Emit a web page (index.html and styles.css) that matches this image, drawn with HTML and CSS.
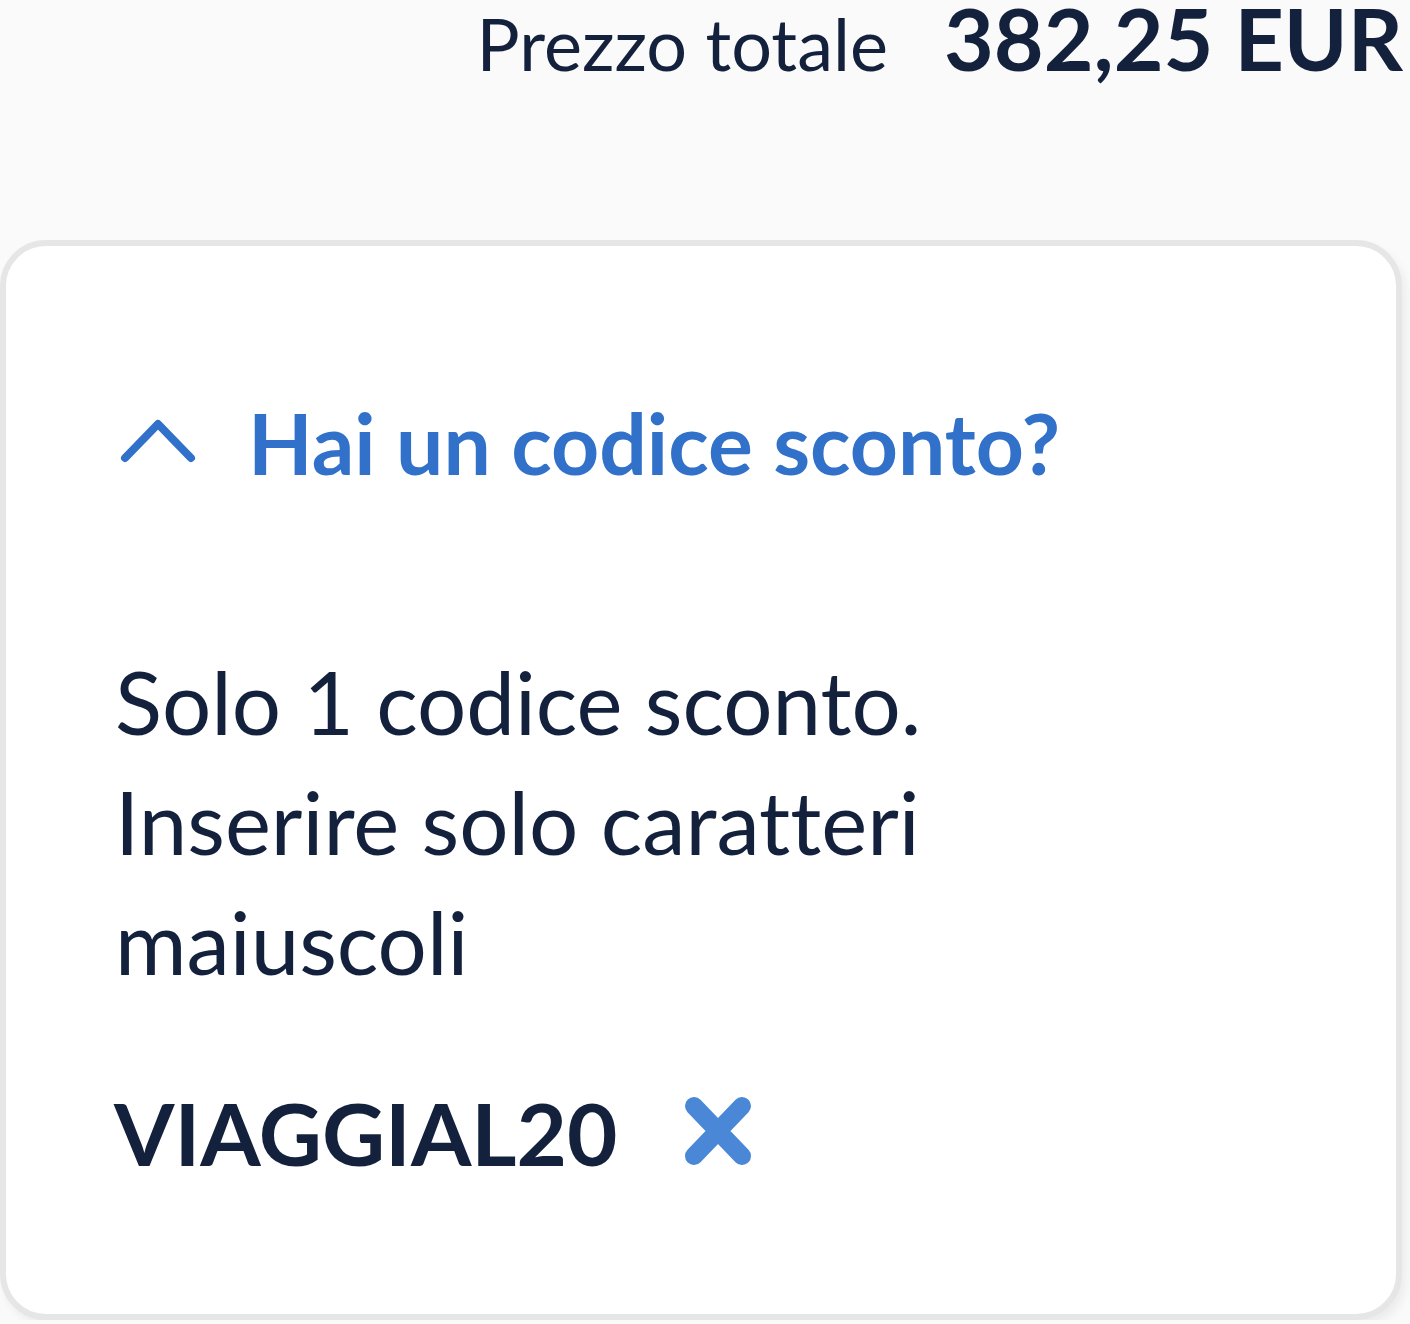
FILE: index.html
```html
<!DOCTYPE html>
<html lang="it">
<head>
    <meta charset="UTF-8">
    <meta name="viewport" content="width=device-width, initial-scale=1.0">
    <title>Codice sconto</title>
    <link rel="stylesheet" href="styles.css">
</head>
<body>

    <div class="total">
        <span class="total-label">Prezzo totale</span>
        <span class="total-value">382,25 EUR</span>
    </div>

    <div class="card">
        <div class="promo-toggle">
            <svg class="chevron" width="76" height="48" viewBox="0 0 76 48">
                <path d="M5 43 L38 9 L71 43" fill="none" stroke="#3171c9" stroke-width="8" stroke-linecap="round" stroke-linejoin="round"/>
            </svg>
            <span>Hai un codice sconto?</span>
        </div>

        <p class="promo-hint">Solo 1 codice sconto.<br>Inserire solo caratteri<br>maiuscoli</p>

        <div class="promo-code">
            <span>VIAGGIAL20</span>
            <svg class="remove" width="66" height="68" viewBox="0 0 66 68">
                <path d="M9 9 L57 59 M57 9 L9 59" fill="none" stroke="#4a87d6" stroke-width="18" stroke-linecap="round"/>
            </svg>
        </div>
    </div>

</body>
</html>
```

FILE: styles.css
```css
body {
    margin: 0;
    font-family: 'Lato', 'Noto Sans', sans-serif;
    font-variant-ligatures: none;
    background-color: #fafafa;
    color: #14213d;
}

.total {
    display: flex;
    justify-content: flex-end;
    align-items: baseline;
    gap: 56px;
    padding-right: 7px;
    height: 240px;
}

.total-label {
    font-size: 72px;
    line-height: 72px;
}

.total-value {
    font-size: 86px;
    font-weight: 700;
    line-height: 76px;
}

.card {
    width: 1390px;
    height: 1068px;
    border: 6px solid #e6e6e6;
    border-radius: 46px;
    background-color: #fff;
    box-shadow: 4px 6px 10px rgba(0, 0, 0, 0.06);
}

.promo-toggle {
    display: flex;
    align-items: center;
    gap: 52px;
    padding: 147px 0 0 114px;
    font-size: 84px;
    font-weight: 700;
    line-height: 1.2;
    color: #3171c9;
}

.chevron {
    flex-shrink: 0;
    margin-top: -8px;
}

.promo-hint {
    margin: 148px 0 0 109px;
    font-size: 87px;
    line-height: 120px;
}

.promo-code {
    display: flex;
    align-items: center;
    gap: 68px;
    margin: 79px 0 0 108px;
    font-size: 87px;
    font-weight: 700;
    line-height: 1.2;
}

.remove {
    flex-shrink: 0;
    margin-top: -4px;
}
```
